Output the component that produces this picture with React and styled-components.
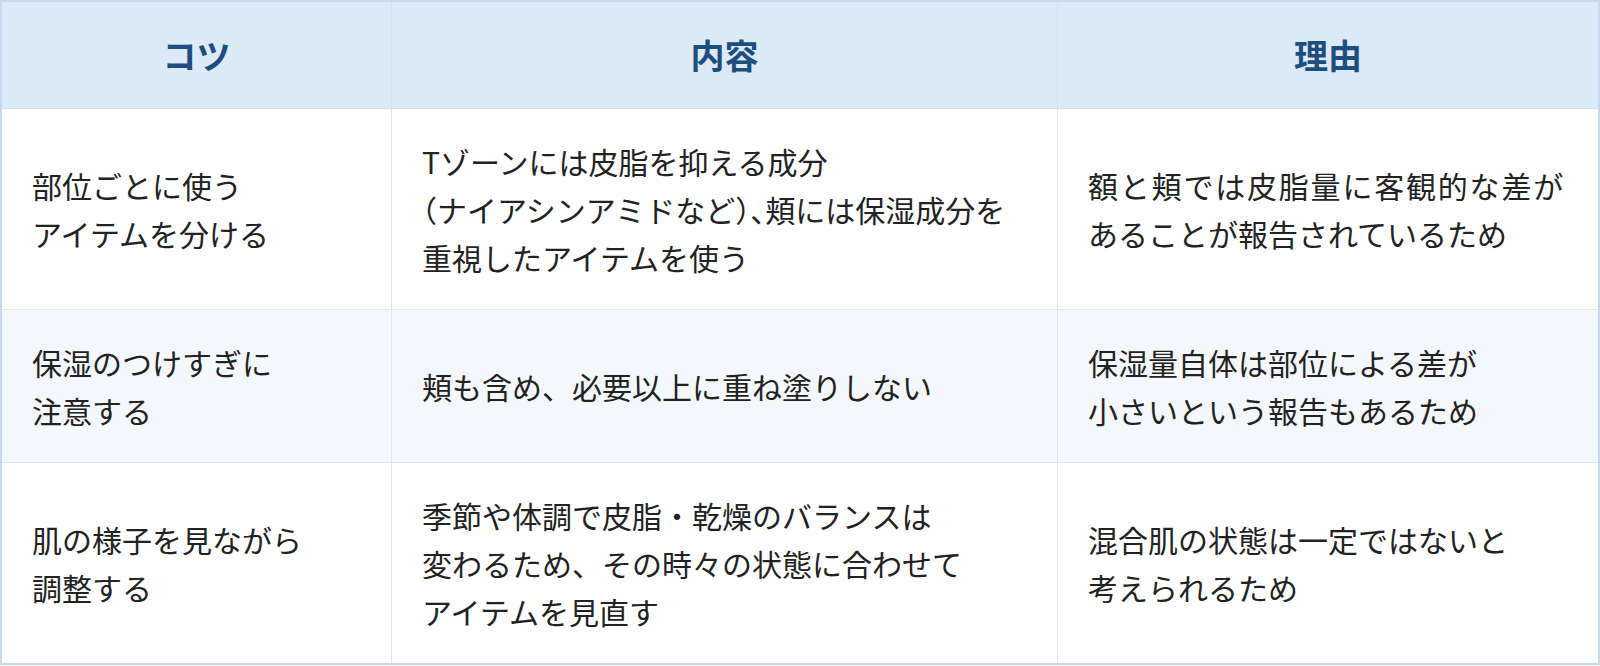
import React from "react";
import styled, { createGlobalStyle } from "styled-components";

const GlobalStyle = createGlobalStyle`
  * {
    box-sizing: border-box;
  }
  body {
    margin: 0;
    background: #ffffff;
    font-family: "Noto Sans CJK JP", "Noto Sans", sans-serif;
  }
`;

// brackets and commas set half width, as in the reference
const Punct = styled.span`
  font-feature-settings: "halt";
`;

// a line that runs out to the cell edge
const Spread = styled.span`
  letter-spacing: 1.8px;
`;

const rows = [
  {
    tip: ["部位ごとに使う", "アイテムを分ける"],
    detail: [
      "Tゾーンには皮脂を抑える成分",
      <>
        <Punct>（</Punct>ナイアシンアミドなど<Punct>）、</Punct>頬には保湿成分を
      </>,
      "重視したアイテムを使う",
    ],
    reason: [
      <Spread>額と頬では皮脂量に客観的な差が</Spread>,
      "あることが報告されているため",
    ],
  },
  {
    tip: ["保湿のつけすぎに", "注意する"],
    detail: ["頬も含め、必要以上に重ね塗りしない"],
    reason: ["保湿量自体は部位による差が", "小さいという報告もあるため"],
  },
  {
    tip: ["肌の様子を見ながら", "調整する"],
    detail: [
      "季節や体調で皮脂・乾燥のバランスは",
      "変わるため、その時々の状態に合わせて",
      "アイテムを見直す",
    ],
    reason: ["混合肌の状態は一定ではないと", "考えられるため"],
  },
];

const Lines = ({ lines }) =>
  lines.map((line, i) => (
    <React.Fragment key={i}>
      {line}
      {i < lines.length - 1 && <br />}
    </React.Fragment>
  ));

const App = () => {
  return (
    <>
      <GlobalStyle />
      <Table>
        <thead>
          <tr>
            <Head $width="390px">コツ</Head>
            <Head $width="666px">内容</Head>
            <Head $last>理由</Head>
          </tr>
        </thead>
        <tbody>
          {rows.map((row, i) => {
            const bottom = i === rows.length - 1;
            return (
              <Row key={i} $alt={i % 2 === 1}>
                <Cell $bottom={bottom}>
                  <Lines lines={row.tip} />
                </Cell>
                <Cell $bottom={bottom}>
                  <Lines lines={row.detail} />
                </Cell>
                <Cell $last $bottom={bottom}>
                  <Lines lines={row.reason} />
                </Cell>
              </Row>
            );
          })}
        </tbody>
      </Table>
    </>
  );
};

const Table = styled.table`
  width: 1600px;
  table-layout: fixed;
  border-collapse: separate;
  border-spacing: 0;
  border: 2px solid #c6d8ea;
  color: #222222;
`;

const Head = styled.th`
  width: ${(p) => p.$width || "auto"};
  height: 107px;
  padding: 0 30px;
  background: #dce9f6;
  color: #1e4e7e;
  font-size: 34px;
  font-weight: 700;
  line-height: 48px;
  text-align: center;
  vertical-align: middle;
  border-bottom: 1px solid #cddff0;
  border-right: ${(p) => (p.$last ? "none" : "1px solid #d3e2f1")};
`;

const Row = styled.tr`
  background: ${(p) => (p.$alt ? "#f4f8fc" : "#ffffff")};
`;

const Cell = styled.td`
  padding: 28px 30px;
  font-size: 30px;
  line-height: 48px;
  text-align: left;
  vertical-align: middle;
  border-bottom: ${(p) => (p.$bottom ? "none" : "1px solid #dbe6f1")};
  border-right: ${(p) => (p.$last ? "none" : "1px solid #dbe6f1")};
`;

export default App;
